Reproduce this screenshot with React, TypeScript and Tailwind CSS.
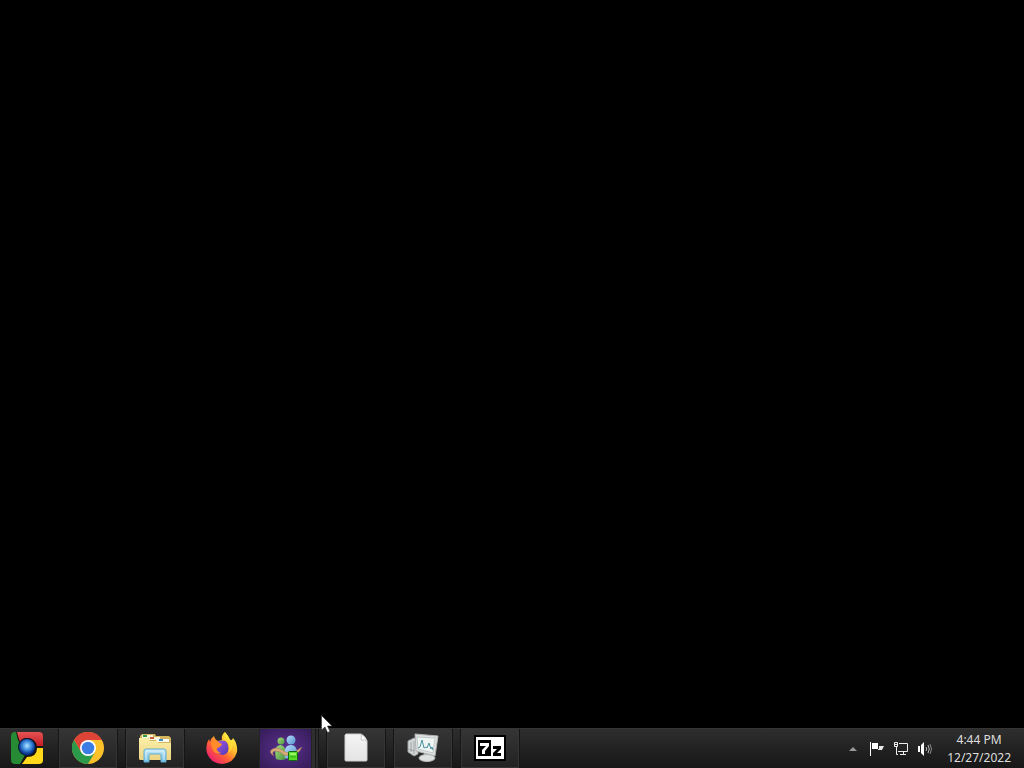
import type { ReactNode } from "react";

type TaskButtonProps = {
  label: string;
  running?: boolean;
  children: ReactNode;
};

function StartIcon() {
  return (
    <svg width="32" height="32" viewBox="0 0 32 32">
      <defs>
        <clipPath id="start-clip">
          <rect width="32" height="32" rx="4" />
        </clipPath>
        <radialGradient id="start-orb" cx="50%" cy="42%">
          <stop offset="0" stopColor="#b5e4ff" />
          <stop offset="0.5" stopColor="#4596e4" />
          <stop offset="1" stopColor="#0b3690" />
        </radialGradient>
        <linearGradient id="start-red" x1="0" y1="0" x2="0" y2="1">
          <stop offset="0" stopColor="#e65355" />
          <stop offset="1" stopColor="#c51d24" />
        </linearGradient>
      </defs>
      <g clipPath="url(#start-clip)">
        <rect width="32" height="32" fill="#1a1713" />
        <path d="M0 0H5Q6 7 9 12Q7 20 14 23L9 32H0Z" fill="#278b36" />
        <path d="M6 0H32V14H26Q24 6 16 6Q11 6 9 10Q7 5 6 0Z" fill="url(#start-red)" />
        <path d="M26 16H32V32H11L16 25Q26 25 26 16Z" fill="#ffd91a" />
      </g>
      <circle cx="16" cy="15" r="9" fill="#09152c" />
      <circle cx="16" cy="15" r="8" fill="url(#start-orb)" />
    </svg>
  );
}

function ChromeIcon() {
  return (
    <svg width="32" height="32" viewBox="0 0 32 32">
      <circle cx="16" cy="16" r="16" fill="#fbc12b" />
      <path d="M2.1 8A16 16 0 0 1 29.9 8H16L9 20Z" fill="#de4337" />
      <path d="M2.1 8A16 16 0 0 0 16 32L23 20L16 23L9 20Z" fill="#2c9a4b" />
      <circle cx="16" cy="16" r="8" fill="#fff" />
      <circle cx="16" cy="16" r="6.3" fill="#3b7de5" />
    </svg>
  );
}

function ExplorerIcon() {
  return (
    <svg width="32" height="32" viewBox="0 0 32 32">
      <defs>
        <linearGradient id="folder" x1="0" y1="0" x2="0" y2="1">
          <stop offset="0" stopColor="#fbf0a8" />
          <stop offset="1" stopColor="#ecd382" />
        </linearGradient>
        <linearGradient id="stand" x1="0" y1="0" x2="0" y2="1">
          <stop offset="0" stopColor="#c8eaf8" />
          <stop offset="1" stopColor="#70bfe5" />
        </linearGradient>
      </defs>
      <path d="M1 4L3 2H16L17 4H30L32 6V28H1Z" fill="#d4b45c" />
      <path d="M3 3H14V6H3Z" fill="#faf6d9" />
      <path d="M4 3H8V5H4Z" fill="#2f9b4b" />
      <path d="M10 5H21V8H10Z" fill="#faf6d9" />
      <path d="M11 5H15V7H11Z" fill="#c85d3c" />
      <path d="M17 7H30V10H17Z" fill="#f9fbf0" />
      <path d="M20 7H24V9H20Z" fill="#3f8fc2" />
      <path d="M0 6H9L11 9H18L20 11H32V27L31 28H1L0 27Z" fill="url(#folder)" />
      <path
        d="M5 19Q5 17 7 17H25Q27 17 27 19V30H22V23Q22 22 21 22H11Q10 22 10 23V30H5Z"
        fill="url(#stand)"
        stroke="#62add1"
      />
      <path d="M7 19H25M7 20V28M25 20V28" stroke="#eefaff" strokeOpacity="0.7" fill="none" />
    </svg>
  );
}

function FirefoxIcon() {
  return (
    <svg width="32" height="32" viewBox="0 0 32 32">
      <defs>
        <linearGradient id="fox" x1="0.85" y1="0.1" x2="0.15" y2="0.9">
          <stop offset="0" stopColor="#fff44a" />
          <stop offset="0.35" stopColor="#ffb52b" />
          <stop offset="0.62" stopColor="#ff6335" />
          <stop offset="1" stopColor="#ed1e70" />
        </linearGradient>
        <linearGradient id="globe" x1="0" y1="0" x2="1" y2="1">
          <stop offset="0" stopColor="#a757df" />
          <stop offset="1" stopColor="#503bb8" />
        </linearGradient>
      </defs>
      <path
        d="M19 0Q22 3 24 8Q26 9 27 6Q32 12 31 20Q28 31 16 32Q4 31 1 21Q-1 13 3 7L4 10Q5 6 8 4Q9 8 12 9L16 8Q15 3 19 0Z"
        fill="url(#fox)"
      />
      <path d="M11 10Q20 6 22 13Q24 22 17 23Q9 22 9 16L15 13Z" fill="url(#globe)" />
      <path d="M5 10Q9 8 12 10L16 12Q15 15 11 16Q10 19 15 21Q10 23 7 18Q5 14 5 10Z" fill="#ff8b29" />
      <path d="M19 0Q16 6 20 9Q26 13 22 21Q28 17 27 8Q24 9 22 4Z" fill="#ffe33b" fillOpacity="0.7" />
    </svg>
  );
}

function MessengerIcon() {
  return (
    <svg width="34" height="28" viewBox="0 0 34 28">
      <defs>
        <linearGradient id="buddy-green" x1="0" y1="0" x2="1" y2="1">
          <stop offset="0" stopColor="#a7dd7c" />
          <stop offset="1" stopColor="#4b9440" />
        </linearGradient>
        <linearGradient id="buddy-blue" x1="0" y1="0" x2="1" y2="1">
          <stop offset="0" stopColor="#b5dcff" />
          <stop offset="1" stopColor="#5590ca" />
        </linearGradient>
      </defs>
      <path d="M7 24Q4 10 12 10Q18 11 17 24Q12 26 7 24Z" fill="url(#buddy-green)" />
      <circle cx="12" cy="6" r="3.5" fill="url(#buddy-green)" />
      <path d="M16 23Q14 10 22 10Q29 10 28 22Q21 25 16 23Z" fill="url(#buddy-blue)" />
      <circle cx="22" cy="5" r="4.5" fill="url(#buddy-blue)" />
      <path
        d="M5 21Q0 18 2 15Q7 11 13 15Q20 20 27 16L33 12Q29 21 20 21Q15 21 11 17Q6 15 4 17Q3 19 5 21Z"
        fill="#d7ad76"
        stroke="#a56b69"
        strokeWidth="0.5"
      />
      <rect x="19.5" y="16.5" width="9" height="9" rx="1" fill="#58dc28" stroke="#126a12" />
      <path d="M21 19H27" stroke="#9af76b" strokeWidth="2" />
      <path d="M21 22H27" stroke="#2fae16" />
    </svg>
  );
}

function FileIcon() {
  return (
    <svg width="24" height="30" viewBox="0 0 24 30">
      <defs>
        <linearGradient id="paper" x1="0" y1="0" x2="0" y2="1">
          <stop offset="0" stopColor="#f4f4f4" />
          <stop offset="1" stopColor="#e4e4e4" />
        </linearGradient>
      </defs>
      <path
        d="M2 1H17Q21 3 23 8V27Q23 28 22 28H2Q1 28 1 27V2Z"
        fill="url(#paper)"
        stroke="#cecece"
      />
      <path d="M17 1Q18 4 17 7Q21 6 23 8Q22 4 17 1Z" fill="#fff" stroke="#b4b4b4" strokeWidth="0.7" />
    </svg>
  );
}

function MonitorIcon() {
  return (
    <svg width="32" height="30" viewBox="0 0 32 30">
      <path d="M1 8L7 5L11 6V21L7 23L1 19Z" fill="#d5d8d9" stroke="#999e9f" />
      <path d="M4 9V19M7 8V21M2 16L7 18" stroke="#898f91" strokeWidth="0.7" />
      <path d="M17 20L23 21L24 26H17Z" fill="#aeb4b5" />
      <ellipse cx="20" cy="25" rx="8" ry="3.5" fill="#dfe1e1" stroke="#b5b8b8" />
      <path d="M8 1L31 3L28 23L9 18Z" fill="#dfe1e0" stroke="#b0b4b4" />
      <path d="M10 4L28 5L26 20L11 16Z" fill="#edf4f2" stroke="#a5b3b3" strokeWidth="0.6" />
      <path
        d="M11 15L13 14L15 7L17 15L19 14L20 15L22 10L24 16L25 14L26 17"
        fill="none"
        stroke="#4c91a0"
      />
    </svg>
  );
}

function SevenZipIcon() {
  return (
    <svg width="32" height="26" viewBox="0 0 32 26">
      <path d="M0 0H32V26H0Z" fill="#000" />
      <path d="M2 2H30V24H2Z" fill="#fff" />
      <path d="M4 5H17V21H4Z" fill="#000" />
      <path d="M6 8H15V11L11 16V19H8V15L12 11H6Z" fill="#fff" />
      <path d="M19 11H27V14L23 18H27V21H19V18L23 14H19Z" fill="#000" />
    </svg>
  );
}

function FlagIcon() {
  return (
    <svg width="16" height="16" viewBox="0 0 16 16">
      <path d="M1 1H2V15H1Z" fill="#fff" />
      <path d="M3 2H9V8H3Z" fill="#fff" />
      <path d="M10 5H15L14 7L13 9H9V8H10Z" fill="#e8e8e8" />
    </svg>
  );
}

function NetworkIcon() {
  return (
    <svg width="16" height="16" viewBox="0 0 16 16" fill="none" stroke="#eee">
      <path d="M6 2.5H14.5V10.5H5M10.5 11V13M7 13.5H13" />
      <path d="M1.5 1.5H4.5V5.5H1.5ZM3.5 6V13.5H5" />
      <path d="M2 3.5H4" />
    </svg>
  );
}

function SpeakerIcon() {
  return (
    <svg width="16" height="16" viewBox="0 0 16 16" fill="none" stroke="#bbb">
      <path d="M1 5H3V11H1ZM4 4L7 1V15L4 12Z" fill="#fff" stroke="none" />
      <path d="M9 6Q10.5 8 9 10M11 4Q13.5 8 11 12" />
      <path d="M13 3Q16 8 13 13" stroke="#888" />
    </svg>
  );
}

function TaskButton({ label, running = true, children }: TaskButtonProps) {
  return (
    <button
      aria-label={label}
      className={`flex h-full w-[60px] shrink-0 items-center justify-center pb-0.5 ${
        running
          ? "border-x border-[#151515] bg-linear-to-b from-[#353535] to-[#222222] inset-ring inset-ring-[#353535]"
          : ""
      }`}
    >
      {children}
    </button>
  );
}

function App() {
  return (
    <div className="relative flex min-h-screen flex-col justify-end bg-black">
      <svg className="absolute bottom-[34px] left-[321px] z-10" width="12" height="19" viewBox="0 0 12 19">
        <path d="M0.5 0.5V15L4 12L6.5 17.5L9 16.5L6.5 11H11Z" fill="#fff" stroke="#333" strokeWidth="0.6" />
      </svg>

      <footer className="flex h-10 items-stretch justify-between border-t border-[#353535] bg-linear-to-b from-[#2e2e2e] to-[#171717]">
        <nav className="flex gap-[7px]">
          <button aria-label="Start" className="flex w-[51px] shrink-0 items-center pb-0.5 pl-[11px]">
            <StartIcon />
          </button>
          <TaskButton label="Google Chrome">
            <ChromeIcon />
          </TaskButton>
          <TaskButton label="Windows Explorer">
            <ExplorerIcon />
          </TaskButton>
          <TaskButton label="Firefox" running={false}>
            <FirefoxIcon />
          </TaskButton>

          <div className="flex w-[60px] shrink-0">
            <button
              aria-label="Messenger"
              className="flex h-full w-[53px] items-center justify-center border-x border-[#242424] bg-radial from-[#5a3091] to-[#351c57]"
            >
              <MessengerIcon />
            </button>
            <span className="w-1 border-r border-[#171717] bg-[#2f2f2f]" />
            <span className="w-[3px] border-r border-[#171717] bg-[#2c2c2c]" />
          </div>

          <TaskButton label="Untitled">
            <FileIcon />
          </TaskButton>
          <TaskButton label="Resource Monitor">
            <MonitorIcon />
          </TaskButton>
          <TaskButton label="7-Zip">
            <SevenZipIcon />
          </TaskButton>
        </nav>

        <div className="flex items-center gap-2 pr-[13px]">
          <button aria-label="Show hidden icons" className="flex h-full w-4 items-center justify-center">
            <svg width="8" height="4" viewBox="0 0 8 4">
              <path d="M0 4L4 0L8 4Z" fill="#999" />
            </svg>
          </button>
          <button aria-label="Action Center">
            <FlagIcon />
          </button>
          <button aria-label="Network">
            <NetworkIcon />
          </button>
          <button aria-label="Volume">
            <SpeakerIcon />
          </button>
          <button className="ml-1.5 text-center font-['Noto_Sans',sans-serif] text-xs leading-[18px] text-[#dedede]">
            <time className="block">4:44 PM</time>
            <time className="block">12/27/2022</time>
          </button>
        </div>
      </footer>
    </div>
  );
}

export default App;
